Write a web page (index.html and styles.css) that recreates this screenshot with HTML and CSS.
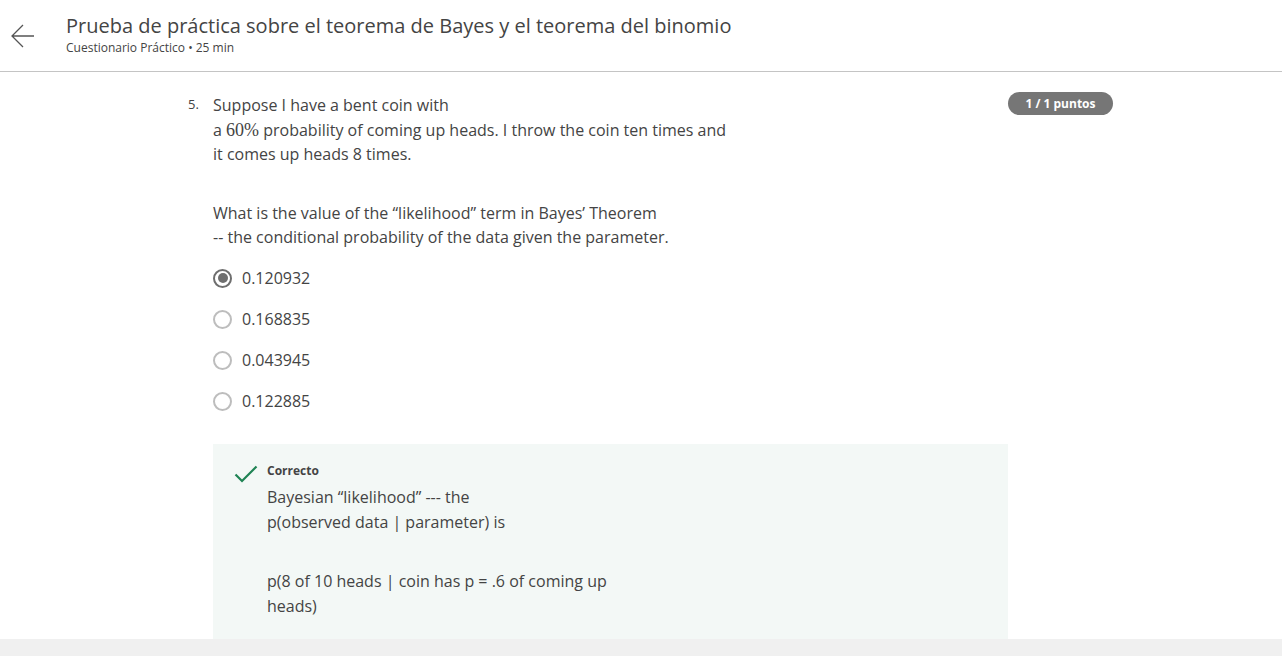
FILE: index.html
```html
<!DOCTYPE html>
<html lang="es">
<head>
<meta charset="utf-8">
<title>Prueba de práctica</title>
<link rel="stylesheet" href="styles.css">
</head>
<body>
<div class="app">
  <header class="topbar">
    <button class="back" aria-label="Volver">
      <svg width="26" height="26" viewBox="0 0 26 26"><path d="M24 13H2M13 2L2 13l11 11" fill="none" stroke="#555" stroke-width="1.3"/></svg>
    </button>
    <div class="titles">
      <h1 class="title">Prueba de práctica sobre el teorema de Bayes y el teorema del binomio</h1>
      <div class="subtitle">Cuestionario Práctico • 25 min</div>
    </div>
  </header>
  <main class="scroll">
    <div class="question">
      <div class="qnum">5.</div>
      <div class="qbody">
        <p class="ptext">Suppose I have a bent coin with<br>a <span class="math">60%</span> probability of coming up heads. I throw the coin ten times and<br>it comes up heads 8 times.</p>
        <p class="ptext gap">What is the value of the “likelihood” term in Bayes’ Theorem<br>-- the conditional probability of the data given the parameter.</p>
        <ul class="options">
          <li class="opt"><span class="radio checked"></span>0.120932</li>
          <li class="opt"><span class="radio"></span>0.168835</li>
          <li class="opt"><span class="radio"></span>0.043945</li>
          <li class="opt"><span class="radio"></span>0.122885</li>
        </ul>
        <div class="feedback">
          <svg class="check" width="24" height="18" viewBox="0 0 24 18"><path d="M1.5 9.5l6.5 6.5L22.5 1.5" fill="none" stroke="#1f8354" stroke-width="2.2"/></svg>
          <div class="fbody">
            <div class="fhead">Correcto</div>
            <p class="ptext fl">Bayesian “likelihood” --- the<br>p(observed data | parameter) is</p>
            <p class="ptext fl gap2">p(8 of 10 heads | coin has p = .6 of coming up<br>heads)</p>
          </div>
        </div>
      </div>
      <div class="badge">1 / 1 puntos</div>
    </div>
  </main>
  <div class="footer"></div>
</div>
</body>
</html>
```
FILE: styles.css
```css
* { box-sizing: border-box; }
html, body { margin: 0; padding: 0; }
body {
  font-family: "Open Sans", "Liberation Sans", sans-serif;
  color: #444;
  background: #fff;
  height: 656px;
  overflow: hidden;
}
.app { display: flex; flex-direction: column; height: 656px; }
.topbar {
  display: flex;
  align-items: flex-start;
  height: 72px;
  border-bottom: 1px solid #c4c4c4;
  flex: none;
}
.back {
  border: 0;
  background: none;
  padding: 0;
  margin: 23px 0 0 10px;
  width: 26px;
  height: 26px;
  cursor: pointer;
}
.titles { margin-left: 30px; padding-top: 12px; }
.title {
  margin: 0;
  font-size: 20px;
  font-weight: 400;
  line-height: 28px;
  color: #444;
}
.subtitle {
  font-size: 12px;
  line-height: 15px;
  color: #444;
  margin-top: 0;
}
.scroll { flex: 1; overflow: hidden; }
.question {
  display: flex;
  align-items: flex-start;
  padding: 20px 0 0 188px;
}
.qnum {
  width: 25px;
  font-size: 13px;
  line-height: 24px;
  color: #444;
  flex: none;
}
.qbody { width: 795px; flex: none; padding-top: 1px; }
.ptext {
  margin: 0;
  font-size: 16px;
  line-height: 24.5px;
  color: #444;
}
.ptext.gap { margin-top: 34px; }
.math { font-family: "Liberation Serif", "DejaVu Serif", serif; font-size: 18px; line-height: 1; }
.options { list-style: none; margin: 8px 0 0; padding: 0; }
.opt {
  display: flex;
  align-items: center;
  height: 41px;
  font-size: 16px;
  color: #444;
}
.radio {
  width: 19px;
  height: 19px;
  border: 2px solid #bdbdbd;
  border-radius: 50%;
  margin-right: 10px;
  position: relative;
  flex: none;
}
.radio.checked { border-color: #6e6e6e; }
.radio.checked::after {
  content: "";
  position: absolute;
  left: 2.5px; top: 2.5px;
  width: 10px; height: 10px;
  border-radius: 50%;
  background: #6e6e6e;
}
.feedback {
  margin-top: 22px;
  background: #f3f8f6;
  display: flex;
  align-items: flex-start;
  padding: 18px 20px 40px 21px;
  min-height: 200px;
}
.check { flex: none; margin-top: 3px; }
.fbody { margin-left: 9px; }
.fhead {
  font-size: 12px;
  font-weight: 700;
  line-height: 18px;
  color: #444;
  margin-bottom: 5px;
}
.ptext.fl { line-height: 25px; }
.ptext.gap2 { margin-top: 34px; }
.badge {
  margin-top: 0;
  width: 105px;
  height: 23px;
  border-radius: 12px;
  background: #767676;
  color: #fff;
  font-size: 12px;
  font-weight: 700;
  line-height: 23px;
  text-align: center;
  flex: none;
}
.footer { height: 17px; background: #f0f0f0; flex: none; }
```
